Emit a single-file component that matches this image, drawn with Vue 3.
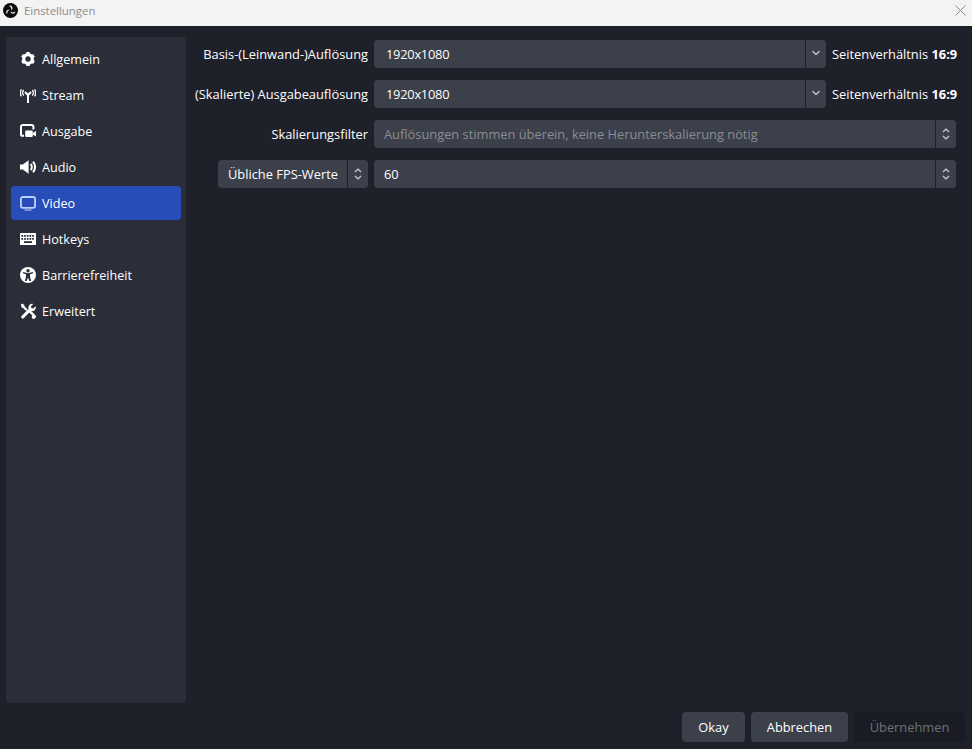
<script setup>
const items = [
  { id: 'gear', label: 'Allgemein' },
  { id: 'stream', label: 'Stream' },
  { id: 'output', label: 'Ausgabe' },
  { id: 'audio', label: 'Audio' },
  { id: 'video', label: 'Video', active: true },
  { id: 'keys', label: 'Hotkeys' },
  { id: 'access', label: 'Barrierefreiheit' },
  { id: 'tools', label: 'Erweitert' },
]
const teeth = [0, 60, 120]
const keyRows = [4, 7]
const keyCols = [2.2, 4.9, 7.6, 10.3, 13]
const blades = [0, 120, 240]
</script>

<template>
  <div class="window">
    <header class="titlebar">
      <svg class="logo" viewBox="0 0 16 16">
        <circle cx="8" cy="8" r="8" fill="#0b0b0b" />
        <path
          v-for="a in blades"
          :key="a"
          d="M6.2 3.1A2.5 2.5 0 1 1 8.7 7.6 3.4 3.4 0 0 0 6.2 3.1z"
          fill="#fff"
          :transform="`rotate(${a} 8 8)`"
        />
      </svg>
      <span class="title">Einstellungen</span>
      <svg class="close" viewBox="0 0 11 11">
        <path d="M.5.5l10 10M10.5.5l-10 10" stroke="#8a8a8a" stroke-width="1" fill="none" />
      </svg>
    </header>

    <div class="content">
      <nav class="sidebar">
        <div v-for="item in items" :key="item.id" class="item" :class="{ active: item.active }">
          <svg class="icon" viewBox="0 0 16 16">
            <g v-if="item.id === 'gear'">
              <circle cx="8" cy="8" r="4.3" fill="none" stroke="#fff" stroke-width="3.2" />
              <rect v-for="a in teeth" :key="a" x="6.3" y="1" width="3.4" height="14" rx="0.6" fill="#fff" :transform="`rotate(${a} 8 8)`" />
              <circle cx="8" cy="8" r="2.7" fill="#2b2e38" />
            </g>
            <g v-else-if="item.id === 'stream'" fill="none" stroke="#fff">
              <path d="M5 5L8 8 11 5M8 8v8" stroke-width="2" />
              <path d="M3.7 3a4.6 4.6 0 0 0 0 5.6M12.3 3a4.6 4.6 0 0 1 0 5.6M1.4 2.2a7.5 7.5 0 0 0 0 7.2M14.6 2.2a7.5 7.5 0 0 1 0 7.2" stroke-width="1.3" />
            </g>
            <g v-else-if="item.id === 'output'">
              <path d="M4 12.8H2.6A1.6 1.6 0 0 1 1 11.2V3.6A1.6 1.6 0 0 1 2.6 2h9.2A1.6 1.6 0 0 1 13.4 3.6V6.5" fill="none" stroke="#fff" stroke-width="2" />
              <rect x="5.2" y="7.6" width="7.6" height="6.4" rx="1.2" fill="#fff" />
              <path d="M12.4 10.2l3.6-2.2v5.6l-3.6-2.2z" fill="#fff" />
            </g>
            <g v-else-if="item.id === 'audio'">
              <path d="M0 5.5h2.8L8.6 1.2v13.6L2.8 10.5H0z" fill="#fff" />
              <path d="M10.6 5a4.2 4.2 0 0 1 0 6M13 2.8a7.6 7.6 0 0 1 0 10.4" fill="none" stroke="#fff" stroke-width="2" />
            </g>
            <g v-else-if="item.id === 'video'">
              <rect x="0.9" y="2" width="14.2" height="10.8" rx="2" fill="none" stroke="#bcd1f8" stroke-width="1.8" />
              <path d="M4.5 15h7" stroke="#bcd1f8" stroke-width="1" />
            </g>
            <g v-else-if="item.id === 'keys'">
              <rect x="0" y="2" width="16" height="12" rx="0.6" fill="#fff" />
              <template v-for="y in keyRows" :key="y">
                <rect v-for="x in keyCols" :key="x" :x="x - 0.8" :y="y" width="1.7" height="1.8" fill="#2b2e38" />
              </template>
              <rect x="4" y="10.2" width="8" height="1.8" fill="#2b2e38" />
            </g>
            <g v-else-if="item.id === 'access'">
              <circle cx="8" cy="8" r="8" fill="#fff" />
              <circle cx="8" cy="3.8" r="1.7" fill="#2b2e38" />
              <path d="M2.8 6.2L6 7.2V9.4L4.9 14H6.6L8 10.4L9.4 14H11.1L10 9.4V7.2L13.2 6.2L12.8 5L8 6.2L3.2 5z" fill="#2b2e38" />
            </g>
            <g v-else>
              <path d="M1 1.6L2 .6l2.2 1.2.4 1.6 3 3-1.5 1.5-3-3-1.6-.4z" fill="#fff" />
              <path d="M9.6 8.2l4.3 4.2" stroke="#fff" stroke-width="2.4" fill="none" />
              <path d="M15.6 3.2l-2.4 2.2-1.8-.3-.4-1.8L13.2 1a3.8 3.8 0 0 0-4.6 4.9L1.5 13a1.6 1.6 0 0 0 2.2 2.2L10.7 8a3.8 3.8 0 0 0 4.9-4.8z" fill="#fff" />
              <path d="M13 16l-1.2-1.2v-1.6l1.4-1.4h1.6L16 13a3 3 0 0 1-3 3z" fill="#fff" />
            </g>
          </svg>
          <span>{{ item.label }}</span>
        </div>
      </nav>

      <main class="form">
        <div class="row">
          <label class="label">Basis-(Leinwand-)Auflösung</label>
          <div class="combo grow">
            <span class="value num">1920x1080</span>
            <span class="arrow">
              <svg viewBox="0 0 10 6" class="chev"><path d="M1.5 1.2L5 4.5 8.5 1.2" /></svg>
            </span>
          </div>
          <span class="ratio">Seitenverhältnis <b>16:9</b></span>
        </div>
        <div class="row">
          <label class="label">(Skalierte) Ausgabeauflösung</label>
          <div class="combo grow">
            <span class="value num">1920x1080</span>
            <span class="arrow">
              <svg viewBox="0 0 10 6" class="chev"><path d="M1.5 1.2L5 4.5 8.5 1.2" /></svg>
            </span>
          </div>
          <span class="ratio">Seitenverhältnis <b>16:9</b></span>
        </div>
        <div class="row">
          <label class="label">Skalierungsfilter</label>
          <div class="combo grow">
            <span class="value muted">Auflösungen stimmen überein, keine Herunterskalierung nötig</span>
            <span class="arrow">
              <svg viewBox="0 0 10 16" class="updown"><path d="M2 6L5 3l3 3M2 10l3 3 3-3" /></svg>
            </span>
          </div>
        </div>
        <div class="row">
          <div class="label">
            <div class="combo fps">
              <span class="value">Übliche FPS-Werte</span>
              <span class="arrow">
                <svg viewBox="0 0 10 16" class="updown"><path d="M2 6L5 3l3 3M2 10l3 3 3-3" /></svg>
              </span>
            </div>
          </div>
          <div class="combo grow">
            <span class="value tight">60</span>
            <span class="arrow">
              <svg viewBox="0 0 10 16" class="updown"><path d="M2 6L5 3l3 3M2 10l3 3 3-3" /></svg>
            </span>
          </div>
        </div>
      </main>
    </div>

    <footer class="footer">
      <button class="btn okay">Okay</button>
      <button class="btn cancel">Abbrechen</button>
      <button class="btn apply" disabled>Übernehmen</button>
    </footer>
  </div>
</template>

<style scoped>
.window {
  width: 972px;
  height: 749px;
  display: flex;
  flex-direction: column;
  background: #1f212a;
  color: #fff;
  font-family: "Open Sans", "Liberation Sans", sans-serif;
  font-size: 12.85px;
  overflow: hidden;
}
.titlebar {
  height: 26px;
  flex: none;
  box-sizing: border-box;
  background: #f3f3f3;
  display: flex;
  align-items: center;
  padding: 0 6px 6px 3px;
}
.logo { width: 15px; height: 15px; flex: none; }
.title {
  margin-left: 6px;
  color: #8c8c8c;
  font-size: 11.4px;
}
.close { width: 11px; height: 11px; margin-left: auto; }
.content {
  flex: 1;
  min-height: 0;
  display: flex;
  padding-top: 11px;
}
.sidebar {
  width: 180px;
  margin-left: 6px;
  padding: 5px;
  box-sizing: border-box;
  background: #2b2e38;
  border-radius: 4px;
  display: flex;
  flex-direction: column;
  gap: 2px;
  font-size: 12.6px;
}
.item {
  height: 34px;
  flex: none;
  display: flex;
  align-items: center;
  padding-left: 9px;
  gap: 6px;
  border-radius: 4px;
}
.item.active { background: #284cb8; }
.icon { width: 16px; height: 16px; flex: none; }
.form {
  flex: 1;
  padding: 3px 16px 0 6px;
  display: flex;
  flex-direction: column;
  gap: 12px;
}
.row {
  display: flex;
  align-items: center;
  gap: 6px;
  height: 28px;
}
.label {
  width: 176px;
  flex: none;
  display: flex;
  justify-content: flex-end;
  white-space: nowrap;
}
.combo {
  height: 28px;
  box-sizing: border-box;
  background: #3c404b;
  border-radius: 4px;
  display: flex;
  align-items: center;
}
.grow { flex: 1; min-width: 0; }
.fps { width: 150px; flex: none; }
.value {
  flex: 1;
  padding-left: 12px;
  white-space: nowrap;
  min-width: 0;
}
.value.num { letter-spacing: -0.25px; }
.value.muted { color: #8b8d93; padding-left: 10px; }
.value.tight { padding-left: 10px; }
.fps .value { padding-left: 10px; }
.arrow {
  width: 21px;
  height: 28px;
  flex: none;
  box-sizing: border-box;
  border-left: 1px solid #1f212a;
  display: flex;
  align-items: center;
  justify-content: center;
}
.chev { width: 10px; height: 6px; margin-top: -2px; }
.updown { width: 10px; height: 16px; }
.chev path, .updown path {
  fill: none;
  stroke: #d2d3d6;
  stroke-width: 1.2;
}
.ratio { flex: none; width: 124px; white-space: nowrap; }
.footer {
  height: 46px;
  flex: none;
  box-sizing: border-box;
  padding: 9px 7px 7px 0;
  display: flex;
  justify-content: flex-end;
  gap: 6px;
}
.btn {
  height: 30px;
  border: none;
  border-radius: 4px;
  background: #3c404b;
  color: #fff;
  font: inherit;
  padding: 0;
}
.okay { width: 63px; }
.cancel { width: 97px; }
.apply { width: 111px; background: #1a1c23; color: #6f7177; }
</style>

<style>
html, body { margin: 0; background: #1f212a; }
</style>
